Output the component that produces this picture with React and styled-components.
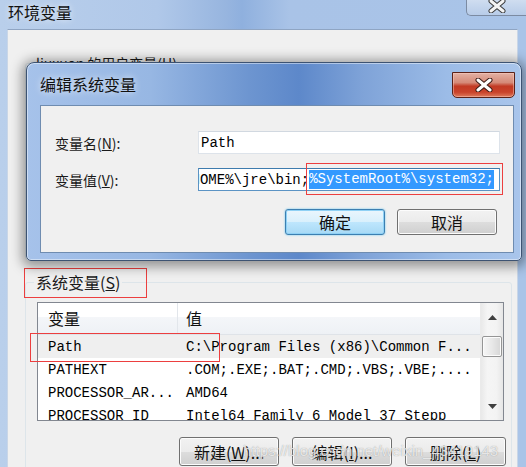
import styled, { createGlobalStyle } from "styled-components";

const GlobalStyle = createGlobalStyle`
  html, body {
    margin: 0;
    padding: 0;
  }
  body {
    width: 526px;
    height: 467px;
    overflow: hidden;
    background: #b4cbe9;
  }
  * {
    box-sizing: border-box;
  }
`;

const CJK = `"Noto Sans CJK SC", "Noto Sans", sans-serif`;
const MONO = `"Liberation Mono", "DejaVu Sans Mono", monospace`;

const Window = styled.div`
  position: relative;
  width: 526px;
  height: 467px;
  overflow: hidden;
  display: flex;
  flex-direction: column;
  font-family: ${CJK};
  color: #000;
  background: linear-gradient(
    90deg,
    #b9cfeb 0%,
    #b0c8e9 30%,
    #97b5df 43%,
    #8fb0de 46%,
    #a9c3e7 55%,
    #a9c4e8 100%
  );
`;

const TitleBar = styled.div`
  height: 29px;
  display: flex;
  align-items: flex-start;
  padding-left: 8px;
  flex-shrink: 0;
`;

const Title = styled.div`
  font-size: 16px;
  line-height: 20px;
  margin-top: 2px;
  color: #111;
  text-shadow: 0 0 6px rgba(255, 255, 255, 0.8);
`;

const GlassClose = styled.div`
  margin-left: auto;
  margin-top: -10px;
  width: 60px;
  height: 26px;
  border: 1px solid #7c8ba2;
  border-right: none;
  border-radius: 0 0 0 5px;
  background: linear-gradient(#dfe8f4, #c8d8ee 55%, #b8cce8);
  display: flex;
  align-items: flex-end;
  justify-content: center;
  padding-bottom: 2px;
`;

const RedClose = styled.div`
  margin-left: auto;
  margin-top: 1px;
  margin-right: -1px;
  width: 63px;
  height: 26px;
  border: 1px solid #5a2219;
  border-radius: 0 0 5px 5px;
  background: linear-gradient(
    #e3b1a4 0%,
    #d58a78 40%,
    #c23a24 55%,
    #c9432b 80%,
    #dd7a5c 100%
  );
  box-shadow: inset 0 0 0 1px rgba(255, 210, 200, 0.45);
  display: flex;
  align-items: center;
  justify-content: center;
`;

const Client = styled.div`
  flex: 1;
  margin: 0 8px 0 7px;
  background: #f0f0f0;
  border-top: 1px solid #8fa5c3;
  border-left: 1px solid #c9d6e7;
  border-right: 1px solid #c9d6e7;
  padding: 24px 5px 0 17px;
  display: flex;
  flex-direction: column;
`;

const Group = styled.fieldset`
  margin: 0;
  padding: ${({ $pad }) => $pad};
  border: 1px solid #dde5ea;
  border-radius: 3px;
  height: ${({ $h }) => $h};
  min-width: 0;
`;

const GroupTitle = styled.legend`
  position: relative;
  margin-left: -3px;
  padding: 0 2px;
  font-size: ${({ $size }) => $size};
  line-height: 18px;
  color: #1a1a1a;
`;

const LegendMark = styled.span`
  position: absolute;
  left: -10px;
  top: -5px;
  width: 123px;
  height: 30px;
  border: 1.5px solid #ec3f3f;
  pointer-events: none;
`;

const ListFrame = styled.div`
  position: relative;
  height: 119px;
  margin-top: 11px;
  border: 1px solid #828790;
  background: #fff;
  display: flex;
`;

const ListBody = styled.div`
  flex: 1;
  overflow: hidden;
`;

const HeaderRow = styled.div`
  height: 32px;
  display: grid;
  grid-template-columns: 140px 1fr;
  background: linear-gradient(#ffffff 0%, #ffffff 45%, #f4f6f9 46%, #eef1f5 100%);
  border-bottom: 1px solid #dfe3e8;
`;

const HeaderCell = styled.div`
  font-size: 16px;
  line-height: 31px;
  padding-left: ${({ $pad }) => $pad};
  border-right: ${({ $divider }) => ($divider ? "1px solid #e2e6eb" : "none")};
  color: #111;
`;

const Row = styled.div`
  height: 23px;
  display: grid;
  grid-template-columns: 140px 1fr;
  align-items: center;
  background: ${({ $selected }) => ($selected ? "#efefef" : "transparent")};
  font-family: ${MONO};
  font-size: 14px;
  white-space: nowrap;
`;

const Cell = styled.div`
  padding-left: ${({ $pad }) => $pad};
  overflow: hidden;
`;

const RowMark = styled.span`
  position: absolute;
  left: -8px;
  top: 30px;
  width: 190px;
  height: 29px;
  border: 1.5px solid #ec3f3f;
  pointer-events: none;
`;

const Scrollbar = styled.div`
  width: 23px;
  background: linear-gradient(90deg, #e9e9e9, #f5f5f5 30%, #f3f3f3 70%, #e6e6e6);
  border-left: 1px solid #eaeaea;
  position: relative;
  display: flex;
  flex-direction: column;
  align-items: center;
`;

const Arrow = styled.div`
  height: 28px;
  width: 100%;
  display: flex;
  align-items: center;
  justify-content: center;
  margin-top: ${({ $top }) => $top};
`;

const Thumb = styled.div`
  margin-top: 5px;
  width: 20px;
  height: 21px;
  border: 1px solid #959595;
  border-radius: 2px;
  background: linear-gradient(90deg, #f6f6f6, #e8e8e8 50%, #d6d6d6);
  box-shadow: inset 0 0 0 1px #fbfbfb;
`;

const ButtonRow = styled.div`
  display: flex;
  justify-content: flex-end;
  gap: 13px;
  margin-top: 16px;
  margin-right: ${({ $right }) => $right};
`;

const Button = styled.div`
  width: ${({ $w }) => $w};
  height: ${({ $h }) => $h};
  border: 1px solid ${({ $primary }) => ($primary ? "#3c7fb1" : "#707070")};
  border-radius: 3px;
  font-size: 16px;
  display: flex;
  align-items: center;
  justify-content: center;
  color: #111;
  background: ${({ $primary }) =>
    $primary
      ? "linear-gradient(#eaf6fd 0%, #d9f0fc 50%, #bee6fd 51%, #a7d9f5 100%)"
      : "linear-gradient(#f2f2f2 0%, #ebebeb 50%, #dddddd 51%, #cfcfcf 100%)"};
  box-shadow: ${({ $primary }) =>
    $primary ? "inset 0 0 0 1px #8fd1f5, 0 0 2px #5ac0f0" : "inset 0 0 0 1px #fcfcfc"};
`;

const Dialog = styled.div`
  position: absolute;
  left: 26px;
  top: 62px;
  width: 496px;
  height: 199px;
  border: 1px solid #3d5372;
  border-radius: 8px 8px 5px 5px;
  padding: 0 7px 7px 13px;
  display: flex;
  flex-direction: column;
  background: linear-gradient(
    90deg,
    #a6c2ea 0%,
    #97b7e3 25%,
    #6d95d0 45%,
    #5d88ca 55%,
    #7fa3d8 68%,
    #9cbce7 85%,
    #a9c5eb 100%
  );
  box-shadow: inset 0 0 0 1px rgba(255, 255, 255, 0.45),
    0 2px 12px 4px rgba(0, 0, 0, 0.38);
`;

const DialogTitle = styled.div`
  height: 42px;
  display: flex;
  align-items: center;
  flex-shrink: 0;
`;

const DialogTitleText = styled.div`
  font-size: 16px;
  line-height: 20px;
  color: #111;
  text-shadow: 0 0 7px rgba(255, 255, 255, 0.9);
  align-self: center;
`;

const DialogClient = styled.div`
  flex: 1;
  background: #f0f0f0;
  border: 1px solid #6f8cb0;
  padding: 25px 13px 0 14px;
  display: flex;
  flex-direction: column;
  gap: 14px;
`;

const Field = styled.div`
  display: flex;
  align-items: center;
  height: 23px;
`;

const Label = styled.div`
  width: 143px;
  font-size: 14px;
  color: #1a1a1a;
`;

const InputWrap = styled.div`
  position: relative;
  width: 302px;
  height: 23px;
`;

const Input = styled.div`
  height: 100%;
  border: 1px solid ${({ $focused }) => ($focused ? "#5b93c4" : "#dde3ea")};
  border-top-color: ${({ $focused }) => ($focused ? "#3d7bad" : "#d1d8e0")};
  background: #fff;
  font-family: ${MONO};
  font-size: 14px;
  display: flex;
  align-items: center;
  justify-content: ${({ $end }) => ($end ? "flex-end" : "flex-start")};
  padding: 0 5px 0 2px;
  overflow: hidden;
  white-space: nowrap;
`;

const Selected = styled.span`
  background: #3399ff;
  color: #fff;
  line-height: 19px;
`;

const SelectionMark = styled.span`
  position: absolute;
  left: 108px;
  top: -5px;
  right: -3px;
  bottom: -4px;
  border: 1.5px solid #ec3f3f;
  pointer-events: none;
`;

const Watermark = styled.div`
  position: absolute;
  left: 243px;
  top: 442px;
  font-family: "Liberation Sans", Arial, sans-serif;
  font-size: 15px;
  color: rgba(255, 255, 255, 0.75);
  text-shadow: 0 0 1px rgba(110, 110, 110, 0.7);
  pointer-events: none;
  white-space: nowrap;
`;

const CloseX = ({ light }) => (
  <svg width="18" height="14" viewBox="0 0 18 14">
    <path
      d="M3 2 L15 12 M15 2 L3 12"
      stroke={light ? "#3b3b3b" : "#3a1a14"}
      strokeWidth="5"
      strokeLinecap="round"
    />
    <path
      d="M3 2 L15 12 M15 2 L3 12"
      stroke={light ? "#f4f4f4" : "#ffffff"}
      strokeWidth="3"
      strokeLinecap="round"
    />
  </svg>
);

const Tri = ({ down }) => (
  <svg width="9" height="5" viewBox="0 0 9 5">
    <polygon points={down ? "0,0 9,0 4.5,5" : "0,5 9,5 4.5,0"} fill="#404040" />
  </svg>
);

const rows = [
  ["Path", "C:\\Program Files (x86)\\Common F..."],
  ["PATHEXT", ".COM;.EXE;.BAT;.CMD;.VBS;.VBE;...."],
  ["PROCESSOR_AR...", "AMD64"],
  ["PROCESSOR_ID", "Intel64 Family 6 Model 37 Stepp"],
];

export default function App() {
  return (
    <>
      <GlobalStyle />
      <Window>
        <TitleBar>
          <Title>环境变量</Title>
          <GlassClose>
            <CloseX light />
          </GlassClose>
        </TitleBar>
        <Client>
          <Group $pad="0 11px" $h="206px">
            <GroupTitle $size="14px">liuxuan 的用户变量(<u>U</u>)</GroupTitle>
          </Group>
          <Group $pad="0 7px 0 11px" $h="200px" style={{ marginTop: 13 }}>
            <GroupTitle $size="16px">
              系统变量(<u>S</u>)
              <LegendMark />
            </GroupTitle>
            <ListFrame>
              <ListBody>
                <HeaderRow>
                  <HeaderCell $pad="10px" $divider>
                    变量
                  </HeaderCell>
                  <HeaderCell $pad="8px">值</HeaderCell>
                </HeaderRow>
                {rows.map(([name, value], i) => (
                  <Row key={name} $selected={i === 0}>
                    <Cell $pad="10px">{name}</Cell>
                    <Cell $pad="8px">{value}</Cell>
                  </Row>
                ))}
              </ListBody>
              <Scrollbar>
                <Arrow $top="0px">
                  <Tri />
                </Arrow>
                <Thumb />
                <Arrow $top="auto">
                  <Tri down />
                </Arrow>
              </Scrollbar>
              <RowMark />
            </ListFrame>
            <ButtonRow $right="-2px">
              <Button $w="100px" $h="29px">
                新建(<u>W</u>)...
              </Button>
              <Button $w="100px" $h="29px">
                编辑(<u>I</u>)...
              </Button>
              <Button $w="101px" $h="29px">
                删除(<u>L</u>)
              </Button>
            </ButtonRow>
          </Group>
        </Client>

        <Dialog>
          <DialogTitle>
            <DialogTitleText>编辑系统变量</DialogTitleText>
            <RedClose>
              <CloseX />
            </RedClose>
          </DialogTitle>
          <DialogClient>
            <Field>
              <Label>
                变量名(<u>N</u>):
              </Label>
              <InputWrap>
                <Input>Path</Input>
              </InputWrap>
            </Field>
            <Field>
              <Label>
                变量值(<u>V</u>):
              </Label>
              <InputWrap>
                <Input $focused $end>
                  <span>;%JAVA_HOME%\jre\bin;</span>
                  <Selected>%SystemRoot%\system32;</Selected>
                </Input>
                <SelectionMark />
              </InputWrap>
            </Field>
            <ButtonRow $right="3px" style={{ marginTop: 4, gap: 12 }}>
              <Button $primary $w="100px" $h="26px">
                确定
              </Button>
              <Button $w="100px" $h="26px">
                取消
              </Button>
            </ButtonRow>
          </DialogClient>
        </Dialog>
        <Watermark>https://blog.csdn.net/weixin_43419143</Watermark>
      </Window>
    </>
  );
}
